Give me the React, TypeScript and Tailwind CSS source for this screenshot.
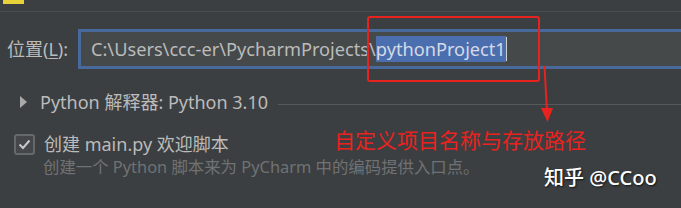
import React from "react";

export default function App() {
  const font = { fontFamily: '"Noto Sans", "Noto Sans CJK SC", sans-serif' };
  return (
    <div
      className="relative w-[681px] h-[208px] overflow-hidden bg-[#3c3f41] text-[#bbbbbb]"
      style={font}
    >
      {/* top strip */}
      <div className="h-[12px] overflow-hidden flex items-start border-b border-[#4b4e50]">
        <div className="ml-[3px] w-[21px] h-[4px] bg-[#e8d23a]" />
        <div className="ml-[16px] mt-[-22px] text-[18px] leading-[24px] text-[#bbbbbb]">新建项目</div>
      </div>

      {/* location row */}
      <div className="mt-[17px] flex items-center">
        <div className="w-[78px] shrink-0 pl-[7px] text-[18px] leading-[24px] whitespace-nowrap">
          位置(<span className="underline underline-offset-2">L</span>):
        </div>
        <div className="w-[640px] shrink-0 h-[40px] border-[3px] border-[#47699b] bg-[#45494a] flex items-center pl-[10px] text-[18.2px] leading-[26px] whitespace-nowrap">
          <span>C:\Users\ccc-er\PycharmProjects\</span>
          <span className="bg-[#4b6eaf] text-[#d4dae6]">pythonProject1</span>
          <span className="w-px h-[24px] bg-[#d0d0d0]" />
        </div>
      </div>

      {/* interpreter row */}
      <div className="mt-[21px] flex items-center h-[24px]">
        <svg className="ml-[20px] shrink-0" width="8" height="12" viewBox="0 0 8 12">
          <path d="M0 0 L7 6 L0 12 Z" fill="#a9a9a9" />
        </svg>
        <div className="ml-[12px] text-[18px] leading-[24px] whitespace-nowrap">Python 解释器: Python 3.10</div>
        <div className="ml-[10px] flex-1 h-px bg-[#55595b] mt-[4px]" />
      </div>

      {/* checkbox row */}
      <div className="mt-[18px] flex items-center h-[24px]">
        <div className="ml-[14px] shrink-0 w-[21px] h-[21px] rounded-[3px] border-2 border-[#66696b] bg-[#43474a] flex items-center justify-center">
          <svg width="13" height="11" viewBox="0 0 13 11">
            <path d="M1.5 5.5 L5 9 L11.5 1.5" fill="none" stroke="#c8c8c8" strokeWidth="2" />
          </svg>
        </div>
        <div className="ml-[9px] text-[18px] leading-[24px] whitespace-nowrap">创建 main.py 欢迎脚本</div>
      </div>

      {/* description */}
      <div className="mt-[0px] pl-[43px] text-[16.4px] leading-[22px] text-[#6f7274] whitespace-nowrap">
        创建一个 Python 脚本来为 PyCharm 中的编码提供入口点。
      </div>

      {/* annotation overlay */}
      <div className="absolute left-[367px] top-[16px] w-[173px] h-[66px] border-2 border-[#e8231f] rounded-[3px]" />
      <svg className="absolute left-[535px] top-[64px]" width="24" height="62" viewBox="0 0 24 62">
        <path d="M9.5 2 L12 48" stroke="#e8231f" strokeWidth="2" fill="none" />
        <path d="M6 44 L18 44 L12.5 58 Z" fill="#e8231f" />
      </svg>
      <div className="absolute left-[334px] top-[125px] text-[21px] leading-[30px] text-[#e8231f] whitespace-nowrap">
        自定义项目名称与存放路径
      </div>
      <div
        className="absolute left-[544px] top-[164px] text-[20px] leading-[28px] text-white font-medium whitespace-nowrap"
        style={{ textShadow: "1px 1px 2px rgba(0,0,0,0.7)" }}
      >
        知乎 @CCoo
      </div>
    </div>
  );
}
